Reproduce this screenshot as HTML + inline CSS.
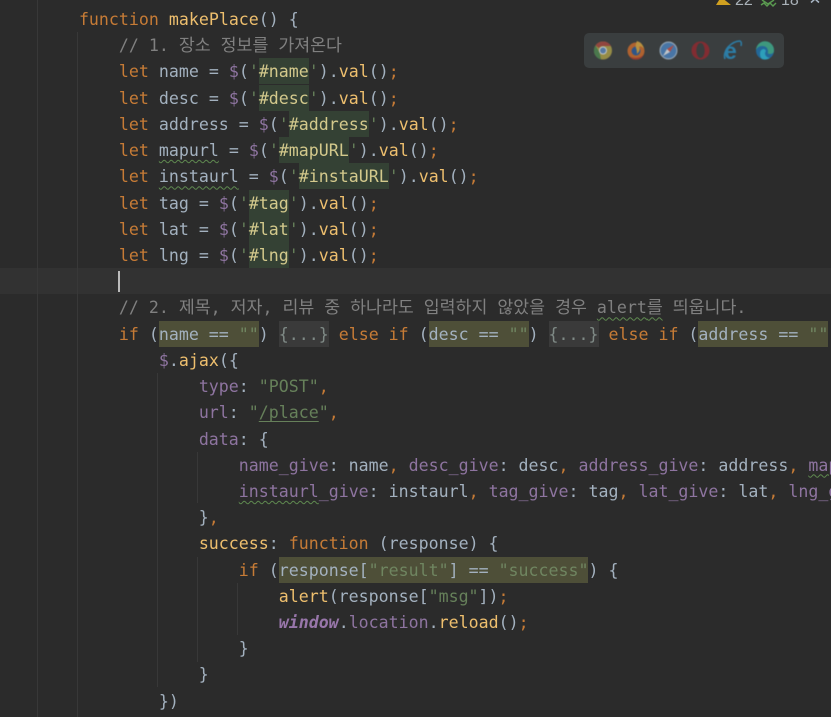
<!DOCTYPE html>
<html lang="ko"><head><meta charset="utf-8"><title>makePlace</title>
<style>
html,body{margin:0;padding:0;background:#2b2b2b}
#r{position:relative;width:831px;height:717px;overflow:hidden;background:#2b2b2b}
.g{position:absolute;width:1px;background:#383838}
#c{position:absolute;left:-1px;top:6px;width:1400px;font-family:"DejaVu Sans Mono","Liberation Mono",monospace;font-size:16.6px;color:#a3b1bf;filter:blur(.3px)}
#c div{height:26.23px;line-height:28px;white-space:pre;padding-left:0}
.k{color:#c67b36}.f{color:#eebf6e}.s{color:#66805a}.p{color:#8e74a0}.o{color:#c67b36}.m{color:#808080}
.w{font-weight:bold;font-style:italic;color:#9876aa}
.ko{font-family:"Noto Sans CJK KR","NanumGothic",sans-serif;font-size:17.3px;line-height:0}
.i{display:inline-block;height:26px;line-height:28px;vertical-align:top}
.h{background:#344134;color:#d3c98c}
.c{background:#4e4f38}
.c .s{color:#6f8560}
.d{background:#3a3a3a;color:#7f8a86}
.u{text-decoration:underline wavy #5f8a50 1px;text-underline-offset:3px}
.l{text-decoration:underline;text-underline-offset:3px}
#b{position:absolute;left:584px;top:33px;width:200px;height:35px;border-radius:5px;background:#3a3e3f}
</style></head><body><div id="r">
<div style="position:absolute;left:0;top:268px;width:831px;height:26px;background:#323232"></div>
<div class="g" style="left:37px;top:0;height:717px"></div>
<div class="g" style="left:77px;top:32px;height:685px"></div>
<div class="g" style="left:157px;top:373px;height:314px"></div>
<div class="g" style="left:197px;top:452px;height:51px"></div>
<div class="g" style="left:197px;top:557px;height:105px"></div>
<div class="g" style="left:237px;top:583px;height:52px"></div>
<div style="position:absolute;left:118px;top:271px;width:2px;height:21px;background:#bbb"></div>
<div id="c">
<div>        <span class="k">function</span> <span class="f">makePlace</span>() {</div>
<div>            <span class="m">// 1. <span class="ko">장소</span> <span class="ko">정보를</span> <span class="ko">가져온다</span></span></div>
<div>            <span class="k">let</span> name = <span class="p">$</span>(<span class="s">'</span><span class="i h">#name</span><span class="s">'</span>).<span class="f">val</span>()<span class="o">;</span></div>
<div>            <span class="k">let</span> desc = <span class="p">$</span>(<span class="s">'</span><span class="i h">#desc</span><span class="s">'</span>).<span class="f">val</span>()<span class="o">;</span></div>
<div>            <span class="k">let</span> address = <span class="p">$</span>(<span class="s">'</span><span class="i h">#address</span><span class="s">'</span>).<span class="f">val</span>()<span class="o">;</span></div>
<div>            <span class="k">let</span> <span class="u">mapurl</span> = <span class="p">$</span>(<span class="s">'</span><span class="i h">#mapURL</span><span class="s">'</span>).<span class="f">val</span>()<span class="o">;</span></div>
<div>            <span class="k">let</span> <span class="u">instaurl</span> = <span class="p">$</span>(<span class="s">'</span><span class="i h">#instaURL</span><span class="s">'</span>).<span class="f">val</span>()<span class="o">;</span></div>
<div>            <span class="k">let</span> tag = <span class="p">$</span>(<span class="s">'</span><span class="i h">#tag</span><span class="s">'</span>).<span class="f">val</span>()<span class="o">;</span></div>
<div>            <span class="k">let</span> lat = <span class="p">$</span>(<span class="s">'</span><span class="i h">#lat</span><span class="s">'</span>).<span class="f">val</span>()<span class="o">;</span></div>
<div>            <span class="k">let</span> lng = <span class="p">$</span>(<span class="s">'</span><span class="i h">#lng</span><span class="s">'</span>).<span class="f">val</span>()<span class="o">;</span></div>
<div> </div>
<div>            <span class="m">// 2. <span class="ko">제목</span>, <span class="ko">저자</span>, <span class="ko">리뷰</span> <span class="ko">중</span> <span class="ko">하나라도</span> <span class="ko">입력하지</span> <span class="ko">않았을</span> <span class="ko">경우</span> <span class="u">alert<span class="ko">를</span></span> <span class="ko">띄웁니다</span>.</span></div>
<div>            <span class="k">if</span> (<span class="i c">name == <span class="s">""</span></span>) <span class="i d">{...}</span> <span class="k">else if</span> (<span class="i c">desc == <span class="s">""</span></span>) <span class="i d">{...}</span> <span class="k">else if</span> (<span class="i c">address == <span class="s">""</span></span>) </div>
<div>                <span class="p">$</span>.<span class="f">ajax</span>({</div>
<div>                    <span class="p">type</span>: <span class="s">"POST"</span><span class="o">,</span></div>
<div>                    <span class="p">url</span>: <span class="s">"<span class="l">/place</span>"</span><span class="o">,</span></div>
<div>                    <span class="p">data</span>: {</div>
<div>                        <span class="p">name_give</span>: name<span class="o">,</span> <span class="p">desc_give</span>: desc<span class="o">,</span> <span class="p">address_give</span>: address<span class="o">,</span> <span class="p"><span class="u">map</span>url_give</span>: mapurl</div>
<div>                        <span class="p"><span class="u">instaurl</span>_give</span>: instaurl<span class="o">,</span> <span class="p">tag_give</span>: tag<span class="o">,</span> <span class="p">lat_give</span>: lat<span class="o">,</span> <span class="p">lng_give</span>: lng</div>
<div>                    }<span class="o">,</span></div>
<div>                    <span class="f">success</span>: <span class="k">function</span> (response) {</div>
<div>                        <span class="k">if</span> (<span class="i c">response[<span class="s">"result"</span>] == <span class="s">"success"</span></span>) {</div>
<div>                            <span class="f">alert</span>(response[<span class="s">"msg"</span>])<span class="o">;</span></div>
<div>                            <span class="w">window</span>.<span class="p">location</span>.<span class="f">reload</span>()<span class="o">;</span></div>
<div>                        }</div>
<div>                    }</div>
<div>                })</div>
</div>
<svg style="position:absolute;left:700px;top:0" width="131" height="12" viewBox="0 0 131 12">
<path d="M21 -3 L31 5 L16 5 Z" fill="#d0a020"/>
<path d="M62 0 L68 4 L74 0 M61 5 L64 3 L67 6 L70 3 L73 6 L76 3" fill="none" stroke="#5a9a50" stroke-width="1.5"/>
<path d="M111 2.500 L115 -1 L119 2.500" fill="none" stroke="#a9b7c6" stroke-width="1.5"/>
</svg>
<div style="position:absolute;left:735px;top:-7px;font:16px/16px 'Liberation Sans',sans-serif;color:#a9b1b8;letter-spacing:0">22</div>
<div style="position:absolute;left:781px;top:-7px;font:16px/16px 'Liberation Sans',sans-serif;color:#a9b1b8">18</div>
<div id="b"></div>
<svg style="position:absolute;left:584px;top:33px;opacity:.85;filter:blur(.4px)" width="200" height="35" viewBox="0 0 200 35">
<g>
<circle cx="19" cy="17.500" r="9" fill="#a69a48"/>
<path d="M19 8.500 A9 9 0 0 1 27 13 L19 13 A4.500 4.500 0 0 0 15 15 L11.500 12.500 A9 9 0 0 1 19 8.500Z" fill="#a2473f"/>
<path d="M11.500 12.500 L15.500 19.500 L17 26.400 A9 9 0 0 1 11.500 12.500Z" fill="#4d8350"/>
<circle cx="19" cy="17.500" r="4" fill="#dcdfe1"/><circle cx="19" cy="17.500" r="3" fill="#5b84b5"/>
</g>
<g>
<circle cx="52" cy="18" r="8.500" fill="#c4692d"/>
<circle cx="52" cy="18" r="4.500" fill="#2d5a96"/>
<path d="M53 8 Q59 10 60 16 Q57 12 55 14 Q57 17 53 21 Q53 17 52 15 Q51 12 53 8Z" fill="#d0a040"/>
<path d="M45 23 A8.500 8.500 0 0 0 60 21 A9 6 0 0 1 45 23Z" fill="#a93c2d"/>
</g>
<g>
<circle cx="84.500" cy="17.500" r="9" fill="#9fb3c7"/><circle cx="84.500" cy="17.500" r="7.800" fill="#4b7fb8"/>
<path d="M90 12 L86 19 L83 16Z" fill="#c25049"/><path d="M79 23 L83 16 L86 19Z" fill="#d8dde2"/>
</g>
<g>
<circle cx="116.500" cy="17.500" r="9" fill="#8f2a30"/><ellipse cx="116.500" cy="17.500" rx="4.200" ry="7.500" fill="#3a3e3f"/>
</g>
<g>
<text x="140" y="26" font-family="'Liberation Sans',sans-serif" font-weight="bold" font-size="23" fill="#2a88b8">e</text>
<path d="M141 26 Q139 21 144 14 Q150 8 156 8 Q158 9 157 13" fill="none" stroke="#2a88b8" stroke-width="1.500"/>
</g>
<g>
<circle cx="181" cy="17.500" r="9" fill="#1f6fa8"/>
<path d="M172 17 A9 9 0 0 1 190 17.500 Q190 21 186 21 Q183 21 184 19 Q184 13 178 13 Q174 13 172 17Z" fill="#3fa88a"/>
<path d="M176 21 Q176 16 180 16 Q183 17 181 20 Q181 24 186 25 Q182 27.500 178 26 Q176 24 176 21Z" fill="#2bb0d0"/>
</g>
</svg>
</div></body></html>
